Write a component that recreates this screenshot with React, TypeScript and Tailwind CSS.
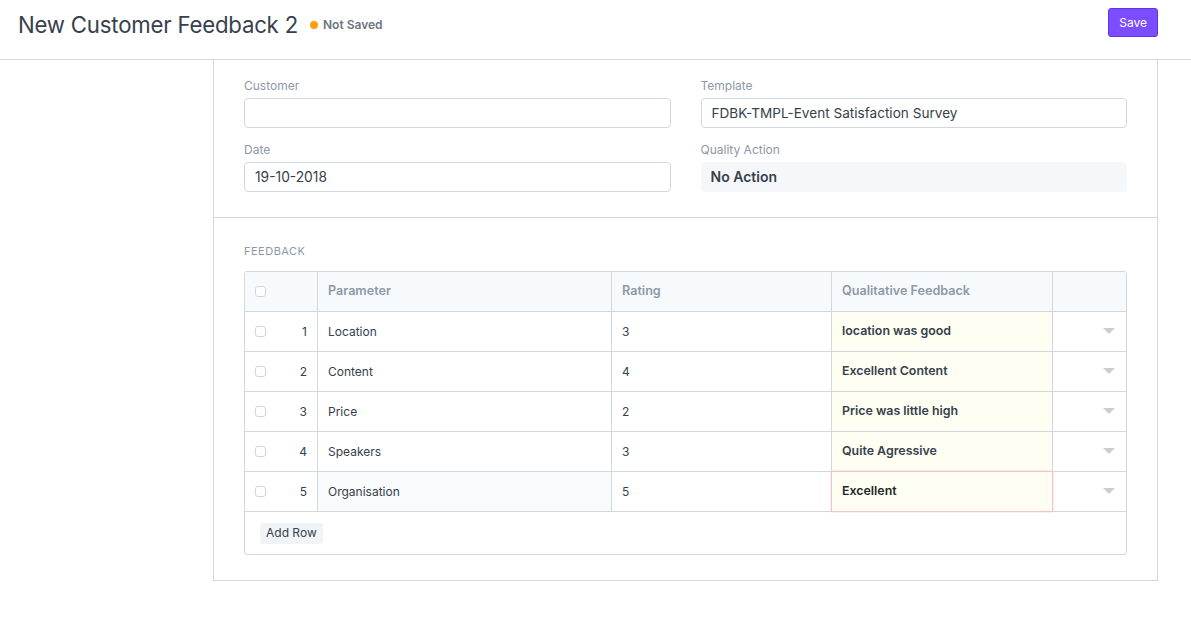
const rows = [
  { idx: 1, param: "Location", rating: "3", feedback: "location was good" },
  { idx: 2, param: "Content", rating: "4", feedback: "Excellent Content" },
  { idx: 3, param: "Price", rating: "2", feedback: "Price was little high" },
  { idx: 4, param: "Speakers", rating: "3", feedback: "Quite Agressive" },
  { idx: 5, param: "Organisation", rating: "5", feedback: "Excellent" },
];

function Checkbox() {
  return <span className="block w-[11px] h-[11px] rounded-[3px] border border-[#cfd5da] bg-white" />;
}

function Caret() {
  return (
    <svg width="12" height="7" viewBox="0 0 12 7" className="block">
      <path d="M0 0h12L6 6z" fill="#c8ced3" />
    </svg>
  );
}

export default function App() {
  return (
    <div className="w-[1191px] h-[618px] bg-white text-[#36414c]" style={{ fontFamily: "Inter, 'Noto Sans', sans-serif" }}>
      {/* page head */}
      <div className="h-[60px] border-b border-[#d1d8dd] flex items-start justify-between pl-[18px] pr-[33px]">
        <div className="flex items-center mt-[8px]">
          <h1 className="text-[22.2px] leading-[34px] font-normal tracking-[-0.2px]">New Customer Feedback 2</h1>
          <span className="ml-[12px] w-[8px] h-[8px] rounded-full bg-[#ffa00a]" />
          <span className="ml-[5px] text-[12px] font-semibold text-[#6c7680]">Not Saved</span>
        </div>
        <button className="mt-[8px] h-[29px] px-[10px] rounded-[3px] bg-[#7b4dff] border border-[#5e35e6] text-white text-[12px]">
          Save
        </button>
      </div>

      {/* form */}
      <div className="ml-[213px] w-[945px] border-x border-b border-[#d1d8dd]">
        <div className="grid grid-cols-2 gap-x-[30px] px-[30px] pt-[16px] pb-[25px] border-b border-[#d1d8dd]">
          <div>
            <div className="text-[12px] text-[#8d99a6] h-[20px] leading-[20px]">Customer</div>
            <div className="mt-[2px] h-[30px] rounded-[4px] border border-[#d1d8dd]" />
            <div className="mt-[12px] text-[12px] text-[#8d99a6] h-[20px] leading-[20px]">Date</div>
            <div className="mt-[2px] h-[30px] rounded-[4px] border border-[#d1d8dd] px-[10px] text-[13.8px] leading-[28px]">19-10-2018</div>
          </div>
          <div>
            <div className="text-[12px] text-[#8d99a6] h-[20px] leading-[20px]">Template</div>
            <div className="mt-[2px] h-[30px] rounded-[4px] border border-[#d1d8dd] px-[10px] text-[13.6px] leading-[28px]">FDBK-TMPL-Event Satisfaction Survey</div>
            <div className="mt-[12px] text-[12px] text-[#8d99a6] h-[20px] leading-[20px]">Quality Action</div>
            <div className="mt-[2px] h-[30px] rounded-[4px] bg-[#f5f7fa] px-[10px] text-[14px] font-semibold leading-[30px]">No Action</div>
          </div>
        </div>

        <div className="px-[30px] pt-[25px] pb-[25px]">
          <div className="text-[11px] tracking-[0.5px] text-[#8d99a6] uppercase leading-[16px]">Feedback</div>
          <div className="mt-[12px] border border-[#d1d8dd] rounded-[3px]">
            <div className="grid grid-cols-[73px_294px_220px_221px_1fr] h-[40px] bg-[#f7fafc] border-b border-[#d1d8dd] font-semibold text-[12.6px] text-[#8d99a6]">
              <div className="flex items-center pl-[10px] border-r border-[#d1d8dd]"><Checkbox /></div>
              <div className="flex items-center px-[10px] border-r border-[#d1d8dd]">Parameter</div>
              <div className="flex items-center px-[10px] border-r border-[#d1d8dd]">Rating</div>
              <div className="flex items-center px-[10px] border-r border-[#d1d8dd]">Qualitative Feedback</div>
              <div />
            </div>
            {rows.map((r) => {
              const last = r.idx === 5;
              return (
                <div key={r.idx} className="grid grid-cols-[73px_294px_220px_221px_1fr] h-[40px] border-b border-[#d1d8dd] text-[12px]">
                  <div className="flex items-center justify-between pl-[10px] pr-[10px] border-r border-[#d1d8dd]">
                    <Checkbox />
                    <span>{r.idx}</span>
                  </div>
                  <div className={"flex items-center px-[10px] border-r border-[#d1d8dd] " + (last ? "bg-[#f9fafb]" : "")}>{r.param}</div>
                  <div className="flex items-center px-[10px] border-r border-[#d1d8dd]">{r.rating}</div>
                  <div
                    className={
                      "flex items-center px-[10px] font-semibold text-[12.4px] bg-[#fffef2] " +
                      (last
                        ? "relative z-10 border border-[#f2c2c4] shadow-[0_0_2px_#f6d0d2] -my-px -ml-px text-[#1f272e]"
                        : "border-r border-[#d1d8dd]")
                    }
                  >
                    {r.feedback}
                  </div>
                  <div className="flex items-center justify-end pr-[11px]"><Caret /></div>
                </div>
              );
            })}
            <div className="h-[42px] flex items-center pl-[15px]">
              <button className="h-[21px] px-[6px] rounded-[3px] bg-[#f0f4f7] text-[12px] text-[#36414c]">Add Row</button>
            </div>
          </div>
        </div>
      </div>
    </div>
  );
}
